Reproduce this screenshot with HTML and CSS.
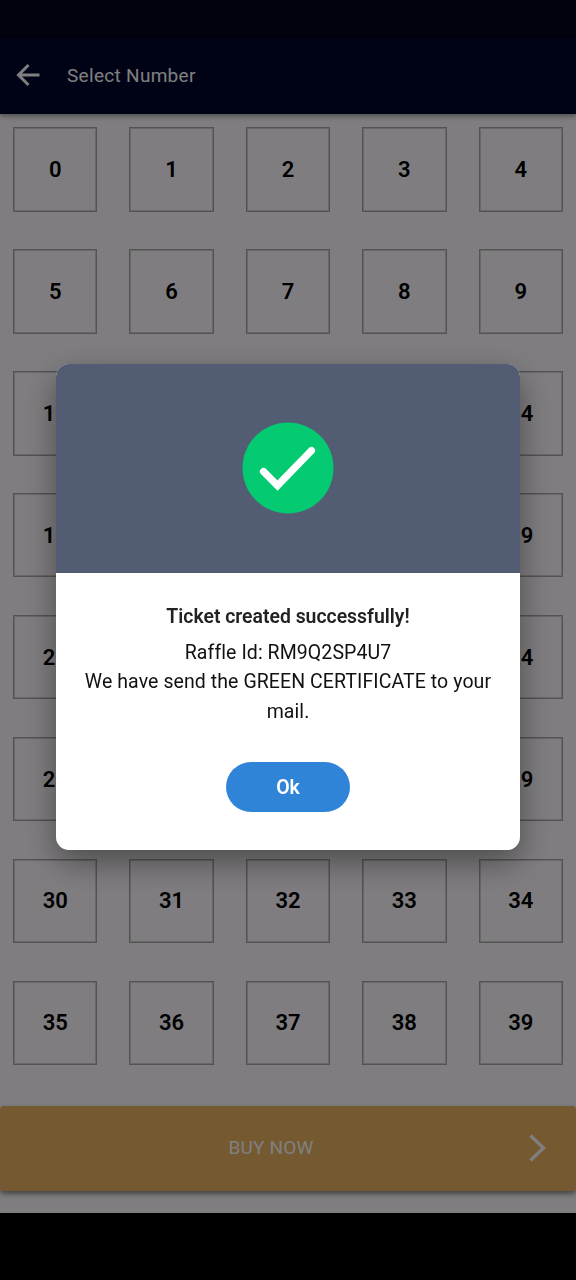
FILE: index.html
```html
<!DOCTYPE html>
<html lang="en">
<head>
  <meta charset="UTF-8" />
  <meta name="viewport" content="width=device-width, initial-scale=1.0"/>
  <title>Select Number</title>
  <link rel="stylesheet" href="styles.css">
</head>
<body>
  <div class="status-bar"></div>

  <header class="app-bar">
    <svg class="back-icon" viewBox="0 0 24 24" fill="none" stroke="currentColor" stroke-width="3">
      <path d="M23.5 12H3M12.5 2L2.5 12L12.5 22"/>
    </svg>
    <span>Select Number</span>
  </header>

  <main class="content">
    <div class="number-grid" id="number-grid"></div>
    <button class="buy-btn">
      <span class="buy-label">BUY NOW</span>
      <svg class="buy-arrow" viewBox="0 0 17 28" fill="none" stroke="currentColor" stroke-width="3.2">
        <path d="M1.5 1.5L14.5 14L1.5 26.5"/>
      </svg>
    </button>
  </main>

  <div class="nav-bar"></div>

  <!-- Success popup -->
  <div class="overlay" id="overlay">
    <div class="modal">
      <div class="modal-header">
        <svg class="check-icon" viewBox="0 0 92 92">
          <circle cx="46" cy="46" r="45.5" fill="#04ca72"/>
          <path d="M21.5 49.5L35.5 63.5L69.5 28.5" fill="none" stroke="#fff" stroke-width="7.2" stroke-linecap="round"/>
        </svg>
      </div>
      <div class="modal-body">
        <h2>Ticket created successfully!</h2>
        <p>Raffle Id: RM9Q2SP4U7<br>We have send the GREEN CERTIFICATE to your mail.</p>
        <button class="ok-btn" onclick="closeModal()">Ok</button>
      </div>
    </div>
  </div>

  <script>
    const grid = document.getElementById('number-grid');

    let html = '';
    for (let i = 0; i < 40; i++) {
      html += `<div class="number-box">${i}</div>`;
    }
    grid.innerHTML = html;

    function closeModal() {
      document.getElementById('overlay').style.display = 'none';
    }
  </script>
</body>
</html>
```
FILE: styles.css
```css
* {
  box-sizing: border-box;
}

body {
  margin: 0;
  height: 1280px;
  display: flex;
  flex-direction: column;
  overflow: hidden;
  font-family: Roboto, sans-serif;
  background-color: #fefbfe;
}

.status-bar {
  height: 38px;
  flex-shrink: 0;
  background-color: #00041a;
}

.app-bar {
  height: 76px;
  flex-shrink: 0;
  display: flex;
  align-items: center;
  gap: 27px;
  padding: 0 16px 2px;
  background-color: #00042c;
  color: #fff;
  font-size: 19px;
  letter-spacing: 0.3px;
  box-shadow: 0 2px 5px rgba(0,0,0,0.4);
}

.back-icon {
  width: 24px;
  height: 24px;
}

.content {
  flex: 1;
  display: flex;
  flex-direction: column;
}

.number-grid {
  display: grid;
  grid-template-columns: repeat(5, 84.4px);
  grid-auto-rows: 84.4px;
  justify-content: space-between;
  row-gap: 37.5px;
  padding: 13.4px 13px 0;
}

.number-box {
  display: flex;
  align-items: center;
  justify-content: center;
  border: 1px solid #a8a6a8;
  box-shadow: inset 0 0 0 1px #d2d0d2;
  font-size: 22px;
  font-weight: 600;
  color: #000;
}

.buy-btn {
  height: 85px;
  margin-top: 41px;
  padding: 0 30px 2px 0;
  display: flex;
  align-items: center;
  border: none;
  border-radius: 4px;
  background-color: #eab462;
  color: #fff;
  font-family: inherit;
  font-size: 19px;
  letter-spacing: 0.2px;
  box-shadow: 0 3px 5px rgba(0,0,0,0.45);
}

.buy-label {
  flex: 1;
  padding-left: 13px;
}

.buy-arrow {
  width: 17px;
  height: 28px;
}

.nav-bar {
  height: 67px;
  flex-shrink: 0;
  background-color: #000;
}

.overlay {
  position: fixed;
  inset: 0;
  display: flex;
  justify-content: center;
  align-items: flex-start;
  padding-top: 363.5px;
  background-color: rgba(0,0,0,0.5);
}

.modal {
  width: 464px;
  height: 486px;
  border-radius: 13px;
  overflow: hidden;
  background-color: #fff;
  box-shadow: 0 12px 32px rgba(0,0,0,0.4);
}

.modal-header {
  height: 209.5px;
  display: flex;
  align-items: center;
  justify-content: center;
  background-color: #525d74;
}

.check-icon {
  width: 92px;
  height: 92px;
}

.modal-body {
  display: flex;
  flex-direction: column;
  align-items: center;
  padding: 32px 24px 0;
  text-align: center;
}

.modal-body h2 {
  margin: 0;
  font-size: 19.4px;
  line-height: 24px;
  font-weight: 600;
  color: #222;
}

.modal-body p {
  margin: 9px 0 0;
  font-size: 19.5px;
  line-height: 29.3px;
  letter-spacing: 0.08px;
  font-variant-ligatures: none;
  color: #111;
}

.ok-btn {
  width: 124px;
  height: 50px;
  margin-top: 36.5px;
  border: none;
  border-radius: 25px;
  background-color: #2f84d8;
  color: #fff;
  font-family: inherit;
  font-size: 19.5px;
  font-weight: 600;
  cursor: pointer;
}
```
